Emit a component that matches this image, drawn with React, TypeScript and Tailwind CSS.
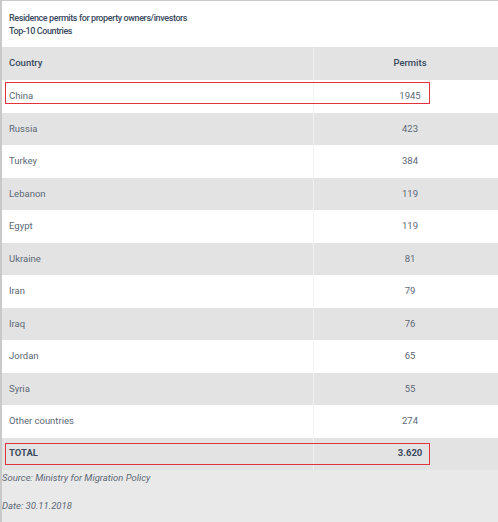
const rows: [string, string][] = [
  ['China', '1945'],
  ['Russia', '423'],
  ['Turkey', '384'],
  ['Lebanon', '119'],
  ['Egypt', '119'],
  ['Ukraine', '81'],
  ['Iran', '79'],
  ['Iraq', '76'],
  ['Jordan', '65'],
  ['Syria', '55'],
  ['Other countries', '274'],
];

function Row({ country, permits, index }: { country: string; permits: string; index: number }) {
  const gray = index % 2 === 1;
  return (
    <div className={`relative flex h-[32.5px] items-center ${gray ? 'bg-[#e3e3e3]' : 'bg-white'}`}>
      <div className="w-[311px] pl-[7px] text-[9.5px] text-[#5d6876]">{country}</div>
      <div
        className={`flex h-full flex-1 items-center justify-center border-l pl-[8px] text-[9.5px] text-[#5d6876] ${
          gray ? 'border-[#efefef]' : 'border-[#f3f3f3]'
        }`}
      >
        {permits}
      </div>
      {index === 0 && (
        <div className="absolute left-[3px] top-[2px] h-[22px] w-[425px] border border-[#e2323f]" />
      )}
    </div>
  );
}

export default function App() {
  return (
    <div
      className="h-[522px] w-[498px] overflow-hidden border-l-2 border-t border-[#c9c9c9] bg-[#e9e9e9]"
      style={{ fontFamily: 'Roboto, "Liberation Sans", sans-serif' }}
    >
      <div className="flex h-[46px] flex-col justify-center bg-white pl-[7px] pt-[2px] text-[9px] font-medium leading-[13px] tracking-[-0.4px] text-[#3b4a5e]">
        <div>Residence permits for property owners/investors</div>
        <div>Top-10 Countries</div>
      </div>
      <div className="flex h-[33px] items-center bg-[#e3e3e3] text-[9.5px] font-medium text-[#3b4a5e]">
        <div className="w-[311px] pl-[7px]">Country</div>
        <div className="flex h-full flex-1 items-center justify-center border-l border-[#efefef] pl-[8px]">Permits</div>
      </div>
      {rows.map(([c, p], i) => (
        <Row key={c} country={c} permits={p} index={i} />
      ))}
      <div className="relative flex h-[32px] items-center bg-[#e3e3e3] text-[9.5px] font-bold text-[#3b4a5e]">
        <div className="w-[311px] pl-[7px]">TOTAL</div>
        <div className="flex h-full flex-1 items-center justify-center border-l border-[#efefef] pl-[8px]">3.620</div>
        <div className="absolute left-[3px] top-[5px] h-[22px] w-[425px] border border-[#e2323f]" />
      </div>
      <div className="flex flex-col gap-[14px] pt-[1px] text-[9.5px] italic leading-[14px] text-[#5d6876]">
        <div>Source: Ministry for Migration Policy</div>
        <div>Date: 30.11.2018</div>
      </div>
    </div>
  );
}
